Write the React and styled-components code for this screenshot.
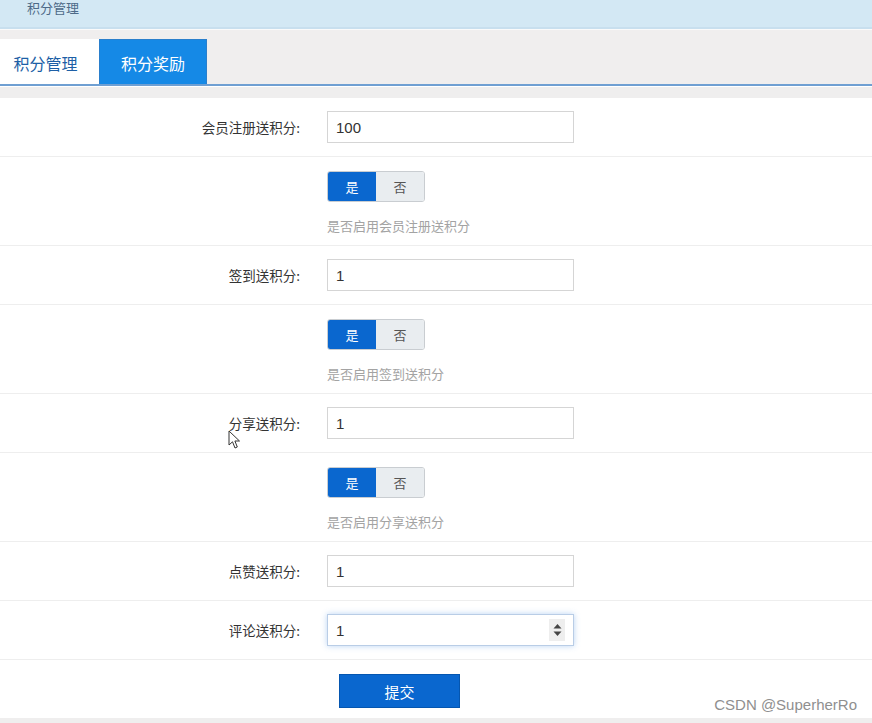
import styled, { createGlobalStyle } from 'styled-components';

const GlobalStyle = createGlobalStyle`
  html, body { margin: 0; padding: 0; background: #fff; }
  body { font-family: "Microsoft YaHei", "Noto Sans CJK SC", "Liberation Sans", sans-serif; }
  * { box-sizing: border-box; }
`;

const rows = [
  { type: 'input', label: '会员注册送积分:', value: '100' },
  { type: 'toggle', hint: '是否启用会员注册送积分' },
  { type: 'input', label: '签到送积分:', value: '1' },
  { type: 'toggle', hint: '是否启用签到送积分' },
  { type: 'input', label: '分享送积分:', value: '1' },
  { type: 'toggle', hint: '是否启用分享送积分' },
  { type: 'input', label: '点赞送积分:', value: '1' },
  { type: 'input', label: '评论送积分:', value: '1', focused: true },
];

const App = () => {
  return (
    <Page>
      <GlobalStyle />
      <TopBar>积分管理</TopBar>
      <TabBar>
        <Tab>积分管理</Tab>
        <Tab $active>积分奖励</Tab>
      </TabBar>
      <Gap />
      <Form>
        {rows.map((r, i) =>
          r.type === 'input' ? (
            <InputRow key={i}>
              <Label>{r.label}</Label>
              <Field $focused={r.focused}>
                <span>{r.value}</span>
                {r.focused && (
                  <Spinner>
                    <svg width="9" height="14" viewBox="0 0 9 14">
                      <path d="M4.5 1 L8.5 5.5 H0.5 Z" fill="#444" />
                      <path d="M4.5 13 L8.5 8.5 H0.5 Z" fill="#444" />
                    </svg>
                  </Spinner>
                )}
              </Field>
            </InputRow>
          ) : (
            <ToggleRow key={i}>
              <span />
              <div>
                <Toggle>
                  <ToggleBtn $on>是</ToggleBtn>
                  <ToggleBtn>否</ToggleBtn>
                </Toggle>
                <Hint>{r.hint}</Hint>
              </div>
            </ToggleRow>
          )
        )}
        <SubmitRow>
          <SubmitBtn>提交</SubmitBtn>
        </SubmitRow>
      </Form>
      <Bottom />
      <Cursor>
        <svg width="14" height="20" viewBox="0 0 14 20">
          <path
            d="M1 1 L1 15 L4.5 11.8 L7 18 L9.3 17 L6.9 11 L11.5 11 Z"
            fill="#fff"
            stroke="#333"
            strokeWidth="1"
            strokeLinejoin="round"
          />
        </svg>
      </Cursor>
      <Watermark>CSDN @SuperherRo</Watermark>
    </Page>
  );
};

export default App;

// Styles
const Page = styled.div`
  position: relative;
  width: 872px;
  height: 723px;
  overflow: hidden;
  background: #fff;
`;

const TopBar = styled.div`
  height: 29px;
  background: #d3e8f4;
  border-bottom: 2px solid #c8dfee;
  padding: 1px 0 0 27px;
  font-size: 13px;
  line-height: 14px;
  color: #4d6a88;
`;

const TabBar = styled.div`
  display: flex;
  align-items: flex-end;
  height: 57px;
  background: #f0eeee;
  border-top: 1px solid #fafafa;
  border-bottom: 2px solid #6f9fd2;
`;

const Tab = styled.div`
  height: 45px;
  width: ${({ $active }) => ($active ? '108px' : '99px')};
  display: flex;
  align-items: center;
  justify-content: center;
  font-size: 16px;
  background: ${({ $active }) => ($active ? '#1589e6' : '#fff')};
  color: ${({ $active }) => ($active ? '#fff' : '#1d5fa6')};
  border: ${({ $active }) => ($active ? '1px solid #2a7fcc' : 'none')};
  border-bottom: none;
  padding-right: ${({ $active }) => ($active ? '0' : '8px')};
  padding-top: 2px;
`;

const Gap = styled.div`
  height: 12px;
  background: #efeeee;
  border-top: 1px solid #fff;
`;

const Form = styled.div`
  background: #fff;
`;

const RowBase = styled.div`
  display: grid;
  grid-template-columns: 300px 247px;
  column-gap: 27px;
  border-bottom: 1px solid #eeeeee;
`;

const InputRow = styled(RowBase)`
  height: 59px;
  align-items: center;
`;

const ToggleRow = styled(RowBase)`
  height: 89px;
  padding-top: 14px;
`;

const Label = styled.div`
  text-align: right;
  font-size: 13.5px;
  color: #333;
`;

const Field = styled.div`
  height: 32px;
  display: flex;
  align-items: center;
  justify-content: space-between;
  padding: 0 8px 0 8px;
  border: 1px solid ${({ $focused }) => ($focused ? '#b9cde6' : '#d5d5d5')};
  box-shadow: ${({ $focused }) => ($focused ? '0 0 6px rgba(102, 160, 230, 0.45)' : 'none')};
  font-family: "Liberation Sans", Arial, sans-serif;
  font-size: 15px;
  color: #333;
  background: #fff;
`;

const Spinner = styled.div`
  width: 16px;
  height: 22px;
  background: #eeeeee;
  display: flex;
  align-items: center;
  justify-content: center;
`;

const Toggle = styled.div`
  display: flex;
  width: 98px;
  height: 31px;
  border-radius: 3px;
  overflow: hidden;
  border: 1px solid #c9cdd1;
`;

const ToggleBtn = styled.div`
  flex: ${({ $on }) => ($on ? '0 0 48px' : '1')};
  display: flex;
  align-items: center;
  justify-content: center;
  font-size: 13px;
  background: ${({ $on }) => ($on ? '#0a67cf' : '#e9edf0')};
  color: ${({ $on }) => ($on ? '#fff' : '#555')};
`;

const Hint = styled.div`
  margin-top: 14px;
  font-size: 13px;
  color: #a3a3a3;
`;

const SubmitRow = styled.div`
  height: 58px;
  padding: 14px 0 0 339px;
`;

const SubmitBtn = styled.div`
  width: 121px;
  height: 34px;
  display: flex;
  align-items: center;
  justify-content: center;
  background: #0a67cf;
  border: 1px solid #0556b0;
  color: #fff;
  font-size: 15px;
`;

const Bottom = styled.div`
  height: 10px;
  background: #efeeee;
`;

const Cursor = styled.div`
  position: absolute;
  left: 228px;
  top: 430px;
`;

const Watermark = styled.div`
  position: absolute;
  right: 15px;
  bottom: 10px;
  font-family: "Liberation Sans", Arial, sans-serif;
  font-size: 15px;
  color: #8f8f8f;
`;
